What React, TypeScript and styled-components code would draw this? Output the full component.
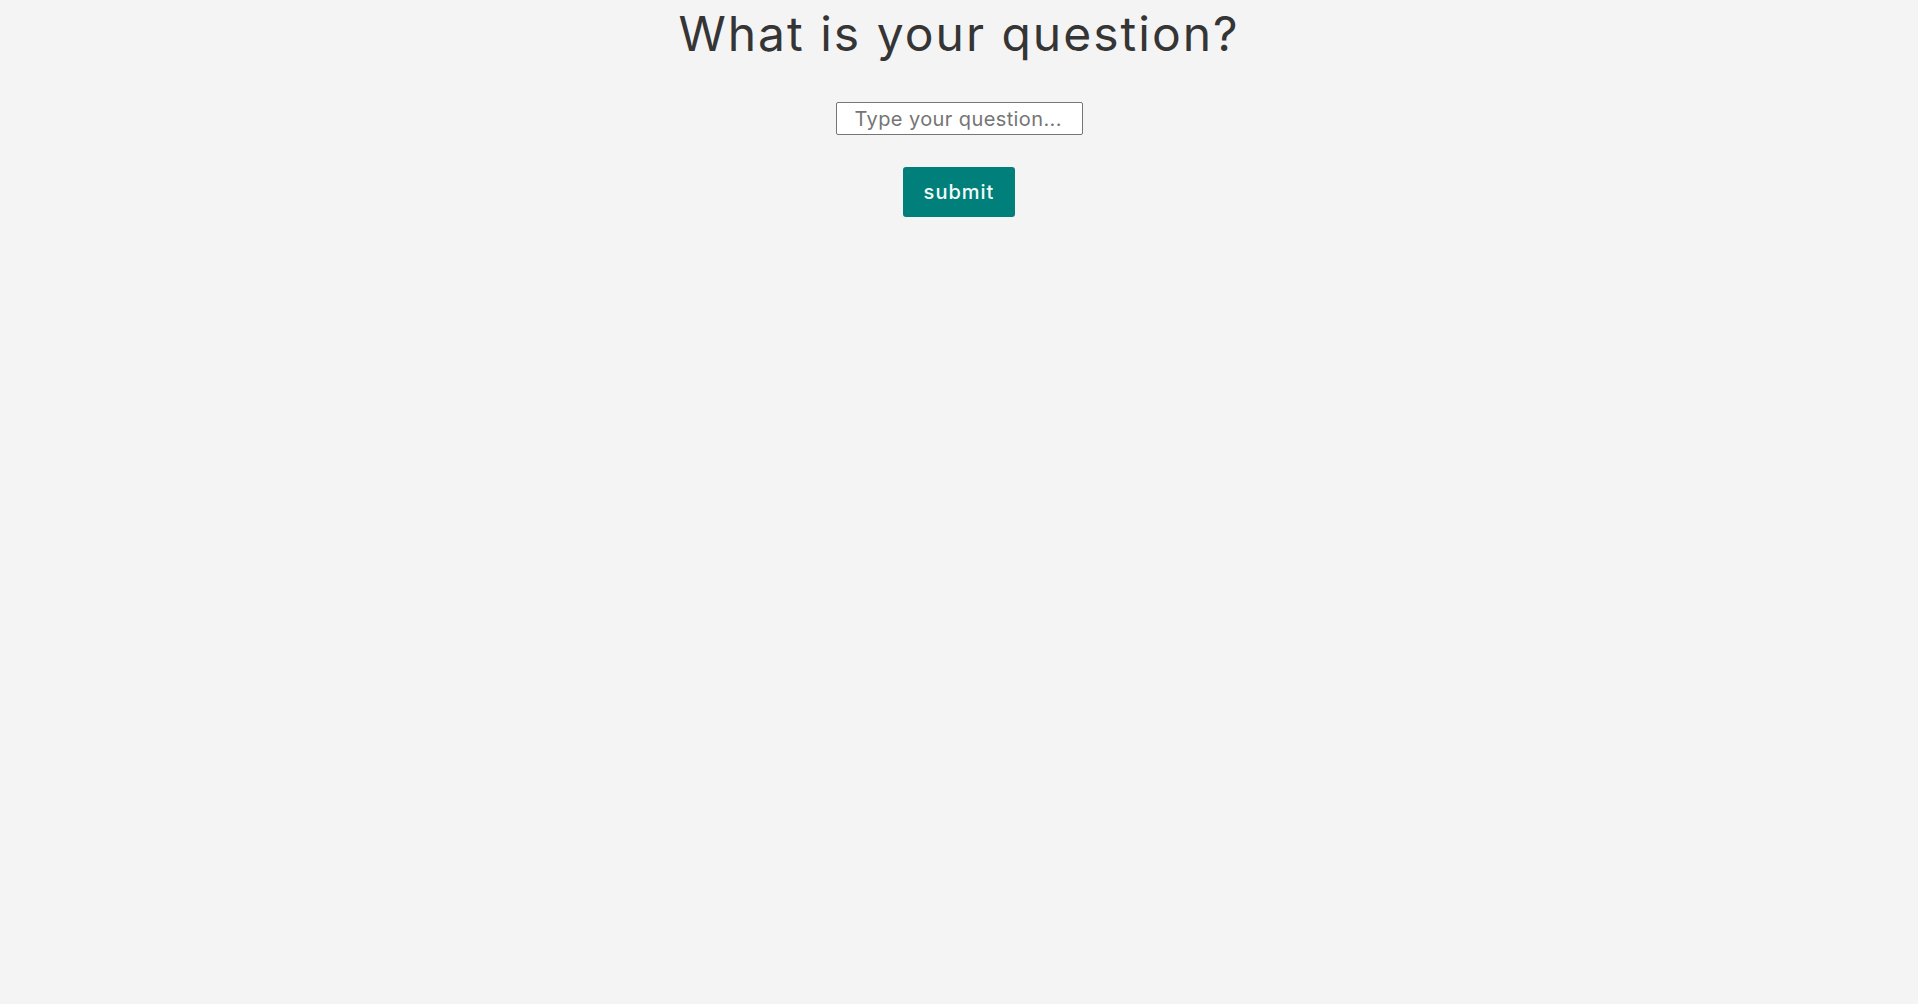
import React from "react";
import styled, { createGlobalStyle } from "styled-components";

const GlobalStyle = createGlobalStyle`
  html, body {
    margin: 0;
    padding: 0;
    background: #f4f4f4;
    font-family: "Inter", "Open Sans", sans-serif;
  }
  #root {
    min-height: 100vh;
  }
`;

const Page = styled.main`
  display: flex;
  flex-direction: column;
  align-items: center;
  min-height: 100vh;
  background: #f4f4f4;
  padding-top: 5px;
  box-sizing: border-box;
`;

const Title = styled.h1`
  margin: 0;
  font-family: "Inter", "Open Sans", sans-serif;
  font-weight: 400;
  font-size: 48px;
  line-height: 58px;
  letter-spacing: 2px;
  color: #353535;
`;

const Form = styled.form`
  display: flex;
  flex-direction: column;
  align-items: center;
  gap: 32px;
  margin-top: 39px;
`;

const QuestionInput = styled.input`
  box-sizing: border-box;
  width: 247px;
  height: 33px;
  padding: 0 18px;
  border: 1px solid #767676;
  border-radius: 2px;
  background: #ffffff;
  font-family: "Inter", "Open Sans", sans-serif;
  font-size: 20px;
  letter-spacing: 0.4px;
  color: #333;
  outline: none;
  &::placeholder {
    color: #757575;
  }
`;

const SubmitButton = styled.button`
  box-sizing: border-box;
  width: 112px;
  height: 50px;
  border: none;
  border-radius: 3px;
  background: #017f7a;
  color: #f2fbfa;
  font-family: "Inter", "Open Sans", sans-serif;
  font-size: 20px;
  font-weight: 500;
  letter-spacing: 1px;
  cursor: pointer;
`;

export default function App() {
  return (
    <>
      <GlobalStyle />
      <Page>
        <Title>What is your question?</Title>
        <Form onSubmit={(e) => e.preventDefault()}>
          <QuestionInput type="text" placeholder="Type your question..." />
          <SubmitButton type="submit">submit</SubmitButton>
        </Form>
      </Page>
    </>
  );
}
